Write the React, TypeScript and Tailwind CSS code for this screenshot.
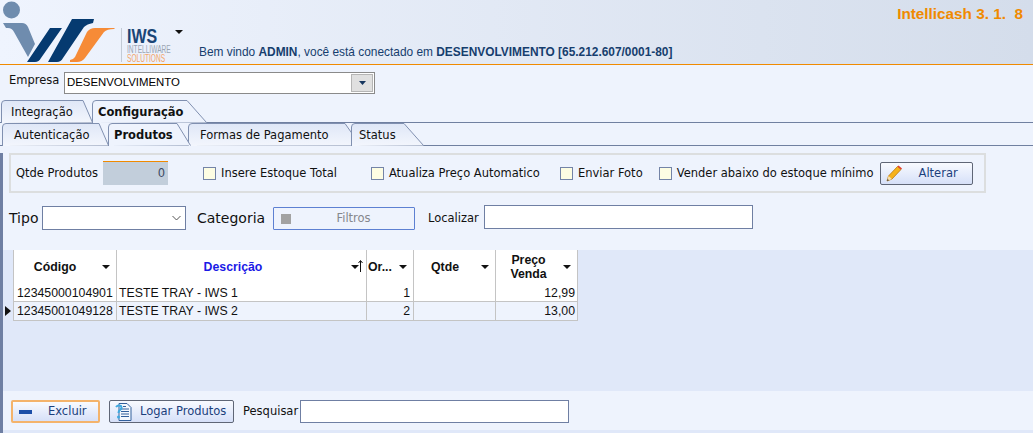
const tahoma = "font-['DejaVu_Sans',sans-serif]";

function Caret({ className = "" }: { className?: string }) {
  return (
    <svg width="8" height="4" viewBox="0 0 8 4" className={className}>
      <path d="M0 0h8L4 4z" fill="#111" />
    </svg>
  );
}

function Logo() {
  return (
    <div className="relative w-[176px] h-[64px] shrink-0">
      <svg width="120" height="64" viewBox="0 0 120 64" className="absolute left-0 top-0">
        <circle cx="11.5" cy="10" r="8.5" fill="#6f8cae" />
        <path d="M3 23h19q4 0 6 4l7 17-7 13L14 32q-2-4-6-4H6z" fill="#6f8cae" />
        <path d="M27 62h8q4 0 6-4l21-30H50z" fill="#053a70" />
        <path d="M48 62h9q4 0 6-4l21-31q3-3 9-4l1-4H72z" fill="#053a70" />
        <path d="M70 62h7q5 0 8-4l19-26q3-3 10-3l1-1H95q-5 0-8 4L75 57q-2 3-5 3z" fill="#f68b37" />
      </svg>
      <div className="absolute left-[121px] top-[28px] w-px h-[34px] bg-[#c3cbd6]" />
      <div className="absolute left-[127px] top-[27px] font-['Liberation_Sans',sans-serif] font-bold text-[20px] leading-[18px] text-[#1a4576] origin-left scale-x-[0.8]">
        IWS
      </div>
      <div className="absolute left-[127px] top-[45px] font-['Liberation_Sans',sans-serif] text-[10px] leading-[9px] text-[#9aa5b3] origin-left scale-x-[0.66] whitespace-nowrap">
        INTELLIWARE
      </div>
      <div className="absolute left-[127px] top-[54px] font-['Liberation_Sans',sans-serif] text-[10px] leading-[9px] text-[#f3a468] origin-left scale-x-[0.66] whitespace-nowrap">
        SOLUTIONS
      </div>
      <Caret className="absolute left-[175px] top-[30px]" />
    </div>
  );
}

function Tab({
  label,
  width,
  slant,
  textLeft,
  active = false,
  overlap = 0,
}: {
  label: string;
  width: number;
  slant: number;
  textLeft: number;
  active?: boolean;
  overlap?: number;
}) {
  const r = width - slant;
  const h = 22;
  return (
    <div
      className={`relative h-[23px] shrink-0 ${active ? "z-10" : ""}`}
      style={{ width, marginLeft: -overlap }}
    >
      <svg width={width} height={23} className="absolute left-0 top-0">
        <defs>
          <linearGradient id="tabg" x1="0" y1="0" x2="0" y2="1">
            <stop offset="0" stopColor="#dfe7f7" />
            <stop offset="1" stopColor="#f3f6fd" />
          </linearGradient>
        </defs>
        <path
          d={`M0.5 ${h + 1}V4Q0.5 0.5 4 0.5H${r}L${width - 0.5} ${h + 0.5}`}
          fill={active ? "#eef3fd" : "url(#tabg)"}
          stroke="#8090b0"
        />
      </svg>
      <span
        className={`absolute top-[5px] text-[11.5px] leading-[14px] whitespace-nowrap text-[#111] ${tahoma} ${
          active ? "font-bold" : ""
        }`}
        style={{ left: textLeft }}
      >
        {label}
      </span>
    </div>
  );
}

function Check({ label }: { label: string }) {
  return (
    <div className="flex items-center gap-[5px]">
      <span className="w-[13px] h-[13px] bg-[#fdfde3] border border-[#7484a7]" />
      <span className="whitespace-nowrap pt-[2px]">{label}</span>
    </div>
  );
}

function PencilIcon() {
  return (
    <svg width="16" height="17" viewBox="0 0 16 17">
      <path d="M1 16l1.5-5L11.5 1.5l3.5 3L6 14z" fill="#f6b21b" stroke="#b9770f" strokeWidth="0.8" />
      <path d="M11.5 1.5l1-1 3.5 3-1 1z" fill="#e33a2a" />
      <path d="M1 16l1.5-5 3.5 3z" fill="#f7dfae" />
      <path d="M1 16l.6-2 1.4 1.2z" fill="#333" />
    </svg>
  );
}

function DocIcon() {
  return (
    <svg width="17" height="18" viewBox="0 0 17 18">
      <path d="M4 0.5h8l4 4v13H4z" fill="#f4f8fd" stroke="#33609c" />
      <path d="M6 6h8M6 8.5h8M6 11h8M6 13.500h8M8 3.500h3" stroke="#33609c" />
      <path d="M1 4q2-2.500 5-1 1.500 2-1 4-1.500 1-1.500 3" fill="none" stroke="#3fa9e0" strokeWidth="2" />
      <circle cx="3.500" cy="14" r="1.500" fill="#3fa9e0" />
    </svg>
  );
}

const btn =
  "flex items-center h-[23px] rounded-[2px] bg-gradient-to-b from-[#f8faff] to-[#d6e0f8] text-[#1b3f7c] text-[11.5px] shrink-0";

function HeaderCell({
  label,
  className,
  labelClass = "",
  caretClass = "right-[6px]",
}: {
  label: React.ReactNode;
  className: string;
  labelClass?: string;
  caretClass?: string;
}) {
  return (
    <div className={`relative h-full flex items-center border-r border-[#c4c4c4] shrink-0 ${className}`}>
      <div className={`font-bold text-center leading-[14px] pb-[2px] ${labelClass}`}>{label}</div>
      <Caret className={`absolute top-[15px] ${caretClass}`} />
    </div>
  );
}

function Row({
  cod,
  desc,
  ord,
  price,
  shaded = false,
  height,
}: {
  cod: string;
  desc: string;
  ord: string;
  price: string;
  shaded?: boolean;
  height: string;
}) {
  const cell = "h-full flex items-center border-r border-[#c4c4c4] shrink-0 whitespace-nowrap";
  return (
    <div className={`flex border-b border-[#c4c4c4] ${height} ${shaded ? "bg-[#eef3fd]" : "bg-white"}`}>
      <div className={`${cell} w-[103px] pl-[3px]`}>{cod}</div>
      <div className={`${cell} w-[250px] pl-[2px]`}>{desc}</div>
      <div className={`${cell} w-[47px] justify-end pr-[3px]`}>{ord}</div>
      <div className={`${cell} w-[82px]`} />
      <div className={`${cell} w-[82px] justify-end pr-[2px]`}>{price}</div>
    </div>
  );
}

export default function App() {
  return (
    <div className={`w-[1033px] h-[433px] overflow-hidden bg-[#eef3fd] text-[11.5px] text-[#111] ${tahoma}`}>
      {/* Header */}
      <div className="relative flex items-end h-[65px] border-b border-[#f08a00] bg-gradient-to-r from-[#eff4fe] to-[#d4ddeb]">
        <Logo />
        <p className="ml-[23px] mb-[5px] font-['Liberation_Sans',sans-serif] text-[11.9px] leading-[14px] text-[#163e6e] whitespace-nowrap">
          Bem vindo <b>ADMIN</b>, você está conectado em <b>DESENVOLVIMENTO [65.212.607/0001-80]</b>
        </p>
        <div className="absolute right-[10px] top-[6px] font-['Liberation_Sans',sans-serif] font-bold text-[15.300px] leading-[16px] text-[#f08a00] whitespace-pre">
          {"Intellicash 3. 1.  8"}
        </div>
      </div>

      {/* Empresa */}
      <div className="flex items-center h-[35px] pl-[9px]">
        <span className="w-[55px] mb-[3px]">Empresa</span>
        <div className="relative flex items-center w-[311px] h-[22px] bg-white border border-[#8a8a8a] pl-[2px] font-['Liberation_Sans',sans-serif] text-[11.4px] text-black">
          DESENVOLVIMENTO
          <div className="absolute right-[1px] top-[1px] w-[22px] h-[18px] bg-[#e0e0e0] border border-[#b5b5b5] flex items-center justify-center">
            <svg width="7" height="4" viewBox="0 0 7 4">
              <path d="M0 0h7L3.500 4z" fill="#17365f" />
            </svg>
          </div>
        </div>
      </div>

      {/* Tabs */}
      <div className="flex h-[23px] pl-[1px] border-b border-[#7080a0]">
        <Tab label="Integração" width={92} slant={10} textLeft={10} />
        <Tab label="Configuração" width={115} slant={20} textLeft={6} active overlap={1} />
      </div>
      <div className="flex h-[23px] pl-[2px] border-b border-[#7080a0]">
        <Tab label="Autenticação" width={107} slant={10} textLeft={12} />
        <Tab label="Produtos" width={83} slant={14} textLeft={6} active overlap={1} />
        <Tab label="Formas de Pagamento" width={173} slant={16} textLeft={12} overlap={3} />
        <Tab label="Status" width={73} slant={20} textLeft={8} overlap={10} />
      </div>

      <div className="h-[287px] border-l-[3px] border-[#6f7fa3]">
        {/* Group box */}
        <div className="ml-[6px] mt-[7px] w-[977px] h-[40px] border-2 border-[#dcdedf] flex items-center pl-[5px]">
          <span className="w-[87px] whitespace-nowrap pt-[2px]">Qtde Produtos</span>
          <div className="w-[65px] h-[24px] bg-[#c2cedb] border-t border-[#f08a00] text-right pr-[3px] pt-[3px] text-[#3c4a63]">
            0
          </div>
          <div className="ml-[35px]"><Check label="Insere Estoque Total" /></div>
          <div className="ml-[34px]"><Check label="Atualiza Preço Automatico" /></div>
          <div className="ml-[20px]"><Check label="Enviar Foto" /></div>
          <div className="ml-[16px]"><Check label="Vender abaixo do estoque mínimo" /></div>
          <button className={`${btn} ml-[6px] w-[93px] border border-[#5f6676] pl-[5px]`}>
            <PencilIcon />
            <span className="ml-[17px] pt-[2px]">Alterar</span>
          </button>
        </div>

        {/* Filters */}
        <div className="flex items-center h-[26px] mt-[12px] pl-[6px]">
          <span className="w-[33px] text-[14px]">Tipo</span>
          <div className="flex items-center justify-end w-[144px] h-[24px] bg-white border border-[#6f7fa3] pr-[4px]">
            <svg width="9" height="6" viewBox="0 0 9 6">
              <path d="M0.500 1l4 4 4-4" fill="none" stroke="#555" />
            </svg>
          </div>
          <span className="ml-[11px] w-[76px] text-[14px]">Categoria</span>
          <div className="relative flex items-center justify-center w-[142px] h-[23px] border border-[#5d80d2] rounded-[1px] text-[#85878c] pl-[19px] pt-[2px]">
            <span className="absolute left-[7px] top-[6px] w-[10px] h-[10px] bg-[#a2a2a2]" />
            Filtros
          </div>
          <span className="ml-[13px] w-[56px] pt-[2px]">Localizar</span>
          <div className="w-[269px] h-[24px] mb-[2px] bg-white border border-[#6f7fa3]" />
        </div>

        {/* Grid */}
        <div className="relative mt-[19px] h-[141px] bg-[#e0e8f9] pl-[10px]">
          <div className="w-[565px] font-['Liberation_Sans',sans-serif] text-[12.3px] leading-[14px] text-[#111] border-l border-[#c4c4c4]">
            <div className="flex h-[35px] bg-white">
              <HeaderCell label="Código" className="w-[103px]" labelClass="w-[82px]" />
              <HeaderCell
                label={<span className="text-[#1a1ae6]">Descrição</span>}
                className="w-[250px]"
                labelClass="w-[232px]"
                caretClass="right-[7px]"
              />
              <HeaderCell label="Or..." className="w-[47px]" labelClass="pl-[1px]" />
              <HeaderCell label="Qtde" className="w-[82px]" labelClass="w-[62px]" />
              <HeaderCell
                label={
                  <>
                    Preço
                    <br />
                    Venda
                  </>
                }
                className="w-[82px]"
                labelClass="w-[65px]"
              />
            </div>
            <Row cod="12345000104901" desc="TESTE TRAY - IWS 1" ord="1" price="12,99" height="h-[17px]" />
            <Row cod="12345001049128" desc="TESTE TRAY - IWS 2" ord="2" price="13,00" height="h-[19px]" shaded />
          </div>
          <svg width="6" height="10" viewBox="0 0 6 10" className="absolute left-[2px] top-[56px]">
            <path d="M0 0l6 5-6 5z" fill="#111" />
          </svg>
          {/* sort arrow beside the Descrição caret */}
          <svg width="5" height="12" viewBox="0 0 5 12" className="absolute left-[355px] top-[10px]">
            <path d="M2.500 12V1M0.500 3l2-2.500 2 2.500" fill="none" stroke="#111" />
          </svg>
        </div>

        {/* Footer */}
        <div className="flex items-center h-[23px] mt-[9px] pl-[8px]">
          <button className={`${btn} w-[89px] border-2 border-[#f4b36b] pl-[6px]`}>
            <span className="w-[13px] h-[4px] bg-[#1c4fa8]" />
            <span className="ml-[16px] pt-[1px]">Excluir</span>
          </button>
          <button className={`${btn} ml-[9px] w-[125px] border border-[#5f6676] pl-[5px]`}>
            <DocIcon />
            <span className="ml-[8px] pt-[1px] whitespace-nowrap">Logar Produtos</span>
          </button>
          <span className="ml-[9px] w-[57px] pt-[1px]">Pesquisar</span>
          <div className="w-[269px] h-[23px] bg-white border border-[#6f7fa3]" />
        </div>
        <div className="h-[3px] mt-[7px] bg-[#e0e8f9]" />
      </div>
    </div>
  );
}
